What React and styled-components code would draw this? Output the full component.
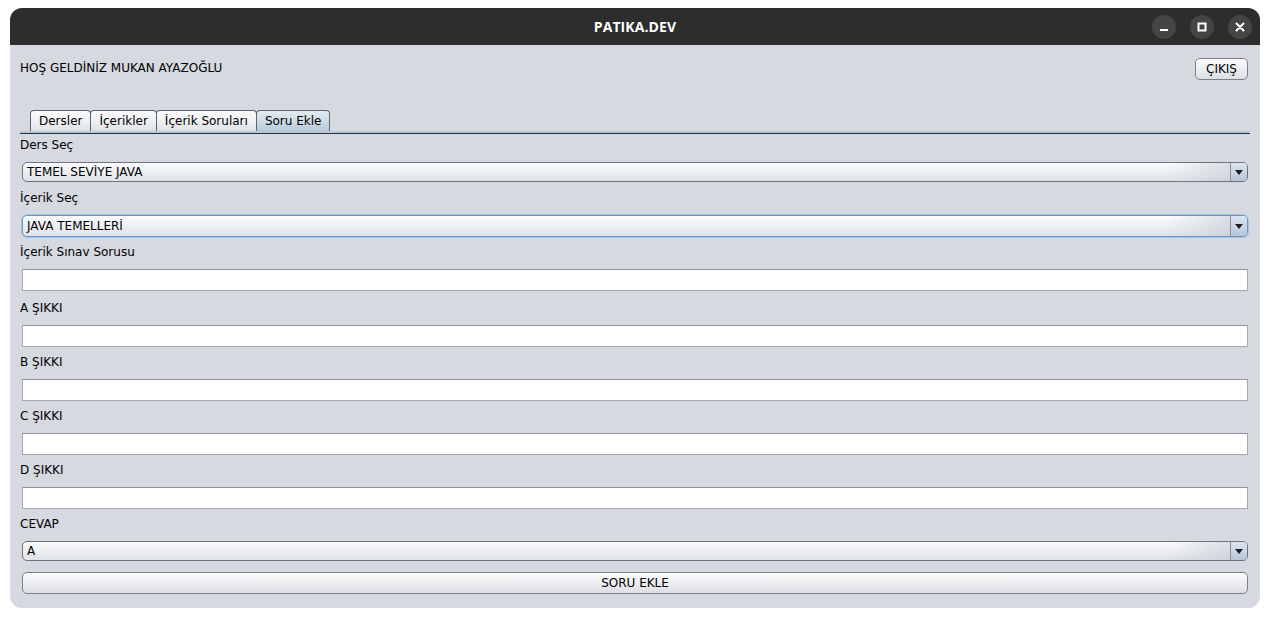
import * as React from 'react';
import styled, { createGlobalStyle, css } from 'styled-components';

const GlobalStyle = createGlobalStyle`
  html, body {
    margin: 0;
    padding: 0;
    background: #ffffff;
  }
  * {
    box-sizing: border-box;
  }
`

const Window = styled.div`
  width: 1250px;
  height: 600px;
  margin: 8px 10px;
  border-radius: 12px;
  overflow: hidden;
  background: #d6d9df;
  display: flex;
  flex-flow: column;
  font-family: "DejaVu Sans", sans-serif;
  font-size: 12px;
  color: #000;
`

const TitleBar = styled.div`
  position: relative;
  height: 37px;
  flex: none;
  background: #2d2d2d;
  display: flex;
  align-items: center;
  justify-content: center;
`

const Title = styled.span`
  font-family: "Open Sans", sans-serif;
  font-weight: 700;
  font-size: 14px;
  color: #ffffff;
  letter-spacing: 0.1px;
`

const WindowControls = styled.div`
  position: absolute;
  right: 8px;
  top: 7px;
  display: flex;
  gap: 14px;
`

const ControlButton = styled.div`
  width: 24px;
  height: 24px;
  border-radius: 50%;
  background: #454545;
  display: flex;
  align-items: center;
  justify-content: center;
`

const Content = styled.div`
  flex: 1;
  display: flex;
  flex-flow: column;
  padding: 13px 10px 0 10px;
`

const Header = styled.div`
  display: flex;
  justify-content: space-between;
  align-items: center;
  padding-right: 2px;
`

const Welcome = styled.span`
  line-height: 16px;
  margin-top: -2px;
`

const buttonLook = css`
  border: 1px solid #7c8087;
  border-radius: 5px;
  background: linear-gradient(#fbfbfc 0%, #f0f1f3 40%, #dcdfe4 100%);
  box-shadow: inset 0 1px 0 #ffffff;
  font-family: "DejaVu Sans", sans-serif;
  font-size: 12px;
  color: #000;
  display: flex;
  align-items: center;
  justify-content: center;
  padding: 0;
`

const Button = styled.button`
  ${buttonLook}
  height: 22px;
  width: ${(props) => props.$wide ? 'auto' : '53px'};
  margin: ${(props) => props.$wide ? '3px 2px 0 2px' : '0'};
`

const TabStrip = styled.div`
  margin-top: 30px;
  display: flex;
  padding-left: 10px;
  height: 21px;
`

const Tab = styled.div`
  height: 21px;
  padding: 0 8px;
  margin-right: -1px;
  border: 1px solid #5e626a;
  border-bottom: none;
  border-radius: 4px 4px 0 0;
  display: flex;
  align-items: center;
  background: ${(props) => props.$active
    ? 'linear-gradient(#e4eaf1 0%, #cad7e5 60%, #b7c8da 100%)'
    : 'linear-gradient(#fafbfc 0%, #eceef1 60%, #dfe2e6 100%)'};
`

const TabRule = styled.div`
  height: 3px;
  border-top: 2px solid #b6c7da;
  border-bottom: 1px solid #2b2e33;
`

const Panel = styled.div`
  display: flex;
  flex-flow: column;
  padding-top: 3px;
`

const Label = styled.div`
  line-height: 16px;
  height: 16px;
  margin-bottom: 9px;
`

const Combo = styled.div`
  height: ${(props) => props.$focused ? '22px' : '20px'};
  margin: 0 2px ${(props) => props.$focused ? '7px' : '8px'} 2px;
  border: 1px solid ${(props) => props.$focused ? '#6a94c8' : '#6f747c'};
  box-shadow: ${(props) => props.$focused ? '0 0 0 1px #a9c3e2' : 'none'};
  border-radius: 5px;
  display: flex;
  overflow: hidden;
  background: linear-gradient(#fafbfc 0%, #eef0f3 45%, #dfe2e7 100%);
`

const ComboText = styled.div`
  flex: 1;
  padding-left: 4px;
  display: flex;
  align-items: center;
  font-size: 12px;
  background: linear-gradient(90deg, transparent 95%, rgba(190, 196, 206, 0.5) 100%);
`

const ComboArrow = styled.div`
  width: 17px;
  flex: none;
  border-left: 1px solid #8a9099;
  background: linear-gradient(#dbe4ee 0%, #c6d3e1 60%, #b5c5d7 100%);
  display: flex;
  align-items: center;
  justify-content: center;
`

const Arrow = styled.div`
  width: 0;
  height: 0;
  border-left: 4px solid transparent;
  border-right: 4px solid transparent;
  border-top: 5px solid #1d1f22;
`

const TextField = styled.div`
  height: 22px;
  margin: 0 2px ${(props) => props.$spaced ? '9px' : '7px'} 2px;
  background: #ffffff;
  border: 1px solid #a3a7ae;
  border-top-color: #8d9199;
`

const ComboBox = ({ value, focused }) => (
  <Combo $focused={focused}>
    <ComboText>{value}</ComboText>
    <ComboArrow><Arrow /></ComboArrow>
  </Combo>
)

const Minimize = () => (
  <svg width="10" height="10" viewBox="0 0 10 10">
    <rect x="1" y="7" width="8" height="2" fill="#fff" />
  </svg>
)

const Maximize = () => (
  <svg width="10" height="10" viewBox="0 0 10 10">
    <rect x="1.5" y="1.5" width="7" height="7" fill="none" stroke="#fff" strokeWidth="2" />
  </svg>
)

const Close = () => (
  <svg width="10" height="10" viewBox="0 0 10 10">
    <path d="M1.5 1.5 L8.5 8.5 M8.5 1.5 L1.5 8.5" stroke="#fff" strokeWidth="2" strokeLinecap="round" />
  </svg>
)

const tabs = ['Dersler', 'İçerikler', 'İçerik Soruları', 'Soru Ekle'];
const choices = ['İçerik Sınav Sorusu', 'A ŞIKKI', 'B ŞIKKI', 'C ŞIKKI', 'D ŞIKKI'];

const App = () => {
  return (
    <>
      <GlobalStyle />
      <Window>
        <TitleBar>
          <Title>PATIKA.DEV</Title>
          <WindowControls>
            <ControlButton><Minimize /></ControlButton>
            <ControlButton><Maximize /></ControlButton>
            <ControlButton><Close /></ControlButton>
          </WindowControls>
        </TitleBar>
        <Content>
          <Header>
            <Welcome>HOŞ GELDİNİZ MUKAN AYAZOĞLU</Welcome>
            <Button>ÇIKIŞ</Button>
          </Header>
          <TabStrip>
            {tabs.map((tab) => (
              <Tab key={tab} $active={tab === 'Soru Ekle'}>{tab}</Tab>
            ))}
          </TabStrip>
          <TabRule />
          <Panel>
            <Label>Ders Seç</Label>
            <ComboBox value="TEMEL SEVİYE JAVA" />
            <Label>İçerik Seç</Label>
            <ComboBox value="JAVA TEMELLERİ" focused />
            {choices.map((item, i) => (
              <React.Fragment key={item}>
                <Label>{item}</Label>
                <TextField $spaced={i === 0} />
              </React.Fragment>
            ))}
            <Label>CEVAP</Label>
            <ComboBox value="A" />
            <Button $wide>SORU EKLE</Button>
          </Panel>
        </Content>
      </Window>
    </>
  )
}

export default App
